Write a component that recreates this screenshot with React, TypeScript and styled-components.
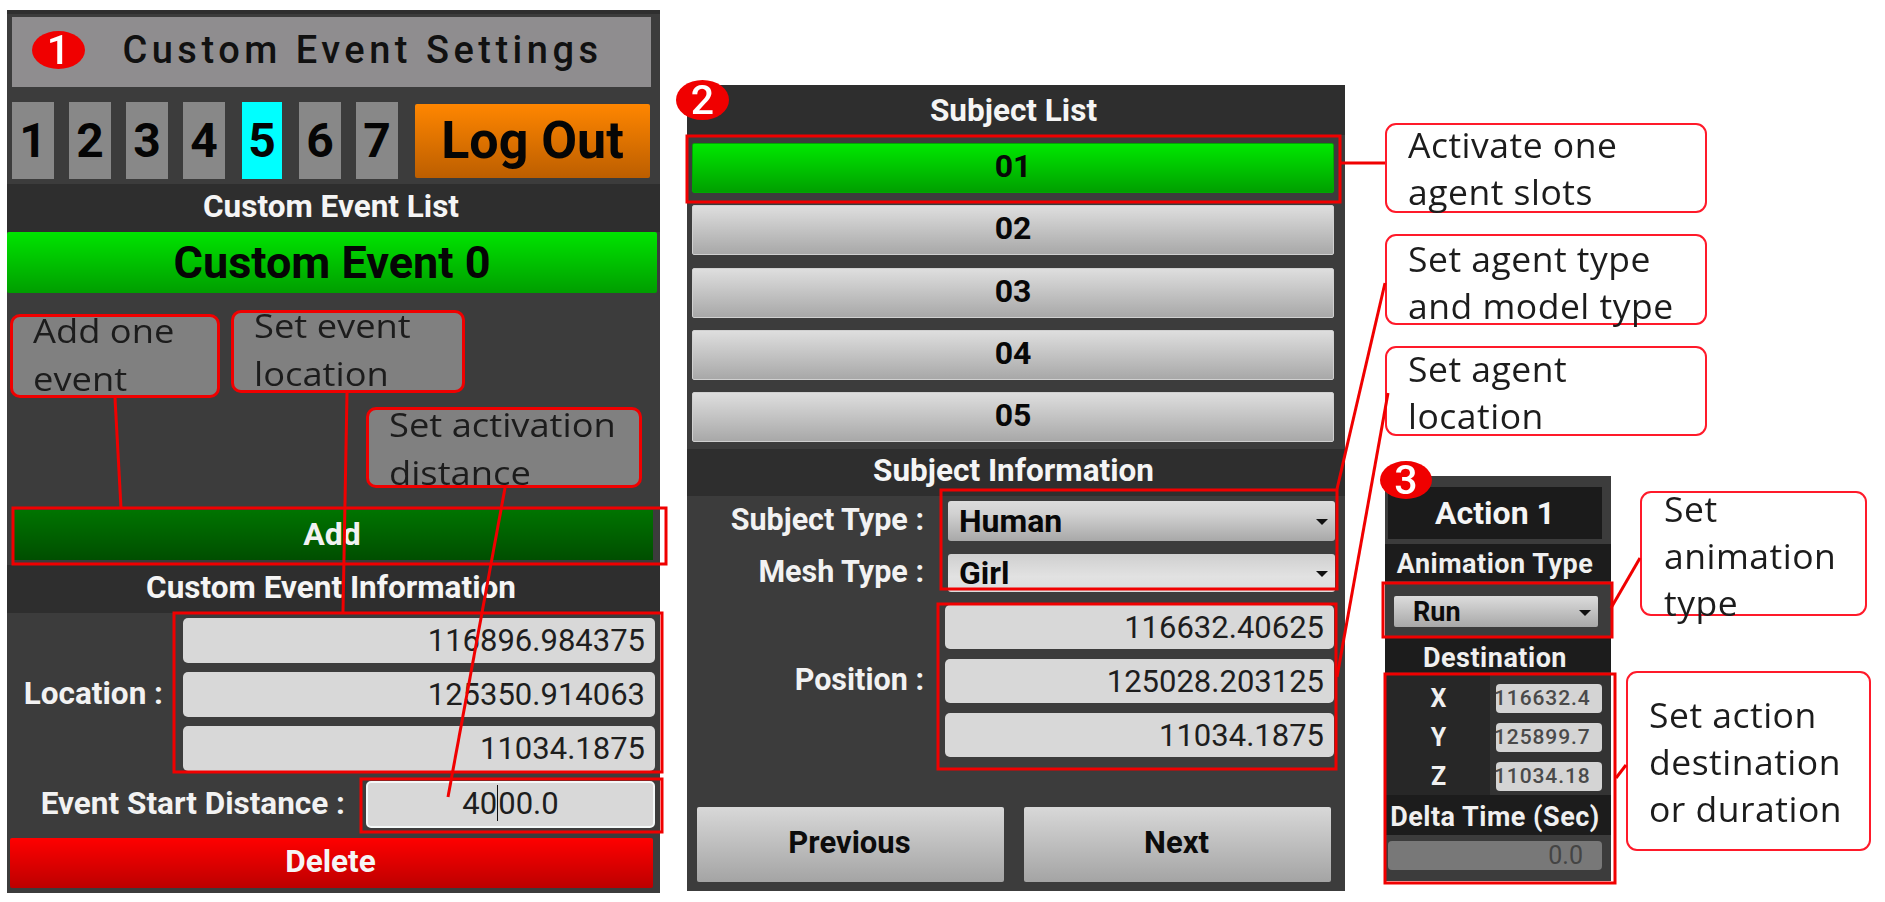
import styled, { createGlobalStyle } from 'styled-components';

const subjects = ['01', '02', '03', '04', '05'];
const tabs = ['1', '2', '3', '4', '5', '6', '7'];

const GlobalStyle = createGlobalStyle`
  html, body {
    margin: 0;
    padding: 0;
    background: #fff;
    font-family: Roboto, "Liberation Sans", sans-serif;
  }

  * {
    box-sizing: border-box;
  }
`;

function App() {
  return (
    <>
      <GlobalStyle />
      <Stage>
        <EventPanel>
          <Badge $left={25} $top={21} $w={53} $h={38}>1</Badge>
          <SettingsTitle>Custom Event Settings</SettingsTitle>
          <TabRow>
            {tabs.map((t) => (
              <Tab key={t} $active={t === '5'}>{t}</Tab>
            ))}
            <LogOut>Log Out</LogOut>
          </TabRow>
          <Strip $h={48}>Custom Event List</Strip>
          <EventItem>Custom Event 0</EventItem>
          <CalloutArea>
            <PanelCallout $left={3} $top={21} $w={210} $h={84} $shift={-10}>
              <StretchText>Add one<br />event</StretchText>
            </PanelCallout>
            <PanelCallout $left={224} $top={17} $w={234} $h={83} $shift={-11}>
              <StretchText>Set event<br />location</StretchText>
            </PanelCallout>
            <PanelCallout $left={359} $top={114} $w={276} $h={81} $shift={-9}>
              <StretchText>Set activation<br />distance</StretchText>
            </PanelCallout>
          </CalloutArea>
          <AddRow>
            <AddButton>Add</AddButton>
          </AddRow>
          <Strip $h={48}>Custom Event Information</Strip>
          <LocationRow>
            <RowLabel $w={176} $pad={20}>Location :</RowLabel>
            <InputStack $gap={9}>
              <NumberField $h={45} $w={472}>116896.984375</NumberField>
              <NumberField $h={45} $w={472}>125350.914063</NumberField>
              <NumberField $h={45} $w={472}>11034.1875</NumberField>
            </InputStack>
          </LocationRow>
          <DistanceRow>
            <RowLabel $w={359} $pad={21}>Event Start Distance :</RowLabel>
            <DistanceField>
              40<Caret />00.0
            </DistanceField>
          </DistanceRow>
          <DeleteButton>Delete</DeleteButton>
        </EventPanel>

        <SubjectPanel>
          <Badge $left={-11} $top={-5} $w={53} $h={40}>2</Badge>
          <Strip $h={50} $lift={0}>Subject List</Strip>
          <SubjectList>
            {subjects.map((s) => (
              <SubjectButton key={s} $active={s === '01'}>{s}</SubjectButton>
            ))}
          </SubjectList>
          <Strip $h={47}>Subject Information</Strip>
          <SelectRow $mt={5}>
            <RowLabel $w={258} $pad={21} $small>Subject Type :</RowLabel>
            <Select $h={40} $w={387}>Human<Arrow /></Select>
          </SelectRow>
          <SelectRow $mt={13}>
            <RowLabel $w={258} $pad={21} $small>Mesh Type :</RowLabel>
            <Select $h={38} $w={387} $light>Girl<Arrow /></Select>
          </SelectRow>
          <PositionRow>
            <RowLabel $w={258} $pad={21} $small>Position :</RowLabel>
            <InputStack $gap={10}>
              <NumberField $h={44} $w={389}>116632.40625</NumberField>
              <NumberField $h={44} $w={389}>125028.203125</NumberField>
              <NumberField $h={44} $w={389}>11034.1875</NumberField>
            </InputStack>
          </PositionRow>
          <PagerRow>
            <PagerButton>Previous</PagerButton>
            <PagerButton>Next</PagerButton>
          </PagerRow>
        </SubjectPanel>

        <RightColumn>
          <NoteStack>
            <Note $w={322} $h={90} $padLeft={21} $shift={-4}><span>Activate one<br />agent slots</span></Note>
            <Note $w={322} $h={91} $padLeft={21} $shift={-1}><span>Set agent type<br />and model type</span></Note>
            <Note $w={322} $h={90} $padLeft={21} $shift={-3}><span>Set agent<br />location</span></Note>
          </NoteStack>
          <ActionRow>
            <ActionPanel>
              <Badge $left={-5} $top={-15} $w={52} $h={38}>3</Badge>
              <ActionTitle>Action 1</ActionTitle>
              <MiniStrip $h={37} $mt={5} $drop={3}>Animation Type</MiniStrip>
              <RunRow>
                <RunSelect>Run<Arrow /></RunSelect>
              </RunRow>
              <MiniStrip $h={36} $drop={8}>Destination</MiniStrip>
              <AxisGrid>
                {[
                  ['X', '116632.40625'],
                  ['Y', '125899.71875'],
                  ['Z', '11034.1875'],
                ].map(([axis, value]) => (
                  <AxisRow key={axis}>
                    <AxisName>{axis}</AxisName>
                    <AxisField><AxisValue>{value}</AxisValue></AxisField>
                  </AxisRow>
                ))}
              </AxisGrid>
              <MiniStrip $h={40} $drop={3}>Delta Time (Sec)</MiniStrip>
              <DeltaField>0.0</DeltaField>
            </ActionPanel>
            <SideNotes>
              <Note $w={227} $h={125} $padLeft={22} $shift={-8}><span>Set<br />animation<br />type</span></Note>
              <Note $w={245} $h={180} $padLeft={21} $shift={18}><span>Set action<br />destination<br />or duration</span></Note>
            </SideNotes>
          </ActionRow>
        </RightColumn>

        <Overlay viewBox="0 0 1885 902" fill="none" stroke="#f00000" strokeWidth="3">
          <rect x="13" y="508" width="653" height="56" />
          <rect x="174" y="613" width="488" height="159" />
          <rect x="361" y="779" width="301" height="53" />
          <rect x="687" y="136" width="653" height="66" />
          <rect x="941" y="490" width="396" height="99" />
          <rect x="938" y="604" width="398" height="165" />
          <rect x="1383" y="583" width="229" height="54" />
          <rect x="1385" y="674" width="230" height="209" />
          <path d="M115 398L121 508" />
          <path d="M347 393L343 612" />
          <path d="M505 488L448 797" />
          <path d="M1340 163H1385" />
          <path d="M1337 489L1385 283" />
          <path d="M1337 677L1388 393" />
          <path d="M1611 608L1640 558" />
          <path d="M1616 778L1626 765" />
        </Overlay>
      </Stage>
    </>
  );
}

const Stage = styled.div`
  position: relative;
  display: flex;
  align-items: flex-start;
  width: 1885px;
  height: 902px;
  padding-left: 7px;
  overflow: hidden;
  filter: blur(0.6px);
`;

const Overlay = styled.svg`
  position: absolute;
  inset: 0;
  width: 1885px;
  height: 902px;
  z-index: 2;
  pointer-events: none;
`;

const Badge = styled.div<{ $left: number; $top: number; $w: number; $h: number }>`
  position: absolute;
  left: ${(p) => p.$left}px;
  top: ${(p) => p.$top}px;
  width: ${(p) => p.$w}px;
  height: ${(p) => p.$h}px;
  border-radius: 50%;
  background: #f00000;
  color: #fff;
  display: flex;
  align-items: center;
  justify-content: center;
  font-size: 41px;
  font-weight: 500;
  line-height: 1;
  z-index: 3;
`;

const EventPanel = styled.section`
  position: relative;
  display: flex;
  flex-direction: column;
  flex: 0 0 653px;
  height: 883px;
  margin-top: 10px;
  background: #3c3c3c;
  box-shadow: inset 0 4px 0 #2f2f2f;
`;

const SettingsTitle = styled.div`
  height: 70px;
  margin: 7px 9px 0 5px;
  padding: 0 0 4px 62px;
  display: flex;
  align-items: center;
  justify-content: center;
  background: #8f8d8f;
  color: #111;
  font-size: 38px;
  font-weight: 500;
  letter-spacing: 4.5px;
`;

const TabRow = styled.div`
  display: flex;
  align-items: center;
  gap: 15px;
  height: 82px;
  margin-top: 15px;
  padding: 0 10px 5px 5px;
`;

const Tab = styled.div<{ $active?: boolean }>`
  flex: 0 0 ${(p) => (p.$active ? 40 : 42)}px;
  height: 77px;
  margin: 0 ${(p) => (p.$active ? 2 : 0)}px;
  display: flex;
  align-items: center;
  justify-content: center;
  background: ${(p) => (p.$active ? '#00ffff' : '#888888')};
  color: #050505;
  font-size: 48px;
  font-weight: 700;
`;

const LogOut = styled.div`
  flex: 1;
  height: 74px;
  margin-left: 2px;
  display: flex;
  align-items: center;
  justify-content: center;
  border-radius: 2px;
  background: linear-gradient(#ff8600, #bc5e00);
  color: #050505;
  font-size: 52px;
  font-weight: 700;
`;

const Strip = styled.div<{ $h: number; $lift?: number }>`
  height: ${(p) => p.$h}px;
  flex: none;
  padding: 0 5px ${(p) => p.$lift ?? 4}px 0;
  display: flex;
  align-items: center;
  justify-content: center;
  background: #2e2e2e;
  color: #f5f5f5;
  font-size: 31.5px;
  font-weight: 700;
`;

const EventItem = styled.div`
  height: 61px;
  margin-right: 3px;
  display: flex;
  align-items: center;
  justify-content: center;
  border-radius: 2px;
  background: linear-gradient(#00e400, #009e00);
  color: #050505;
  font-size: 45px;
  font-weight: 700;
`;

const CalloutArea = styled.div`
  position: relative;
  height: 214px;
`;

const PanelCallout = styled.div<{ $left: number; $top: number; $w: number; $h: number; $shift: number }>`
  position: absolute;
  left: ${(p) => p.$left}px;
  top: ${(p) => p.$top}px;
  width: ${(p) => p.$w}px;
  height: ${(p) => p.$h}px;
  padding-left: 20px;
  border: 3px solid #f00000;
  border-radius: 10px;
  background: #808080;
  color: #1c1c1c;
  font-family: "Open Sans", sans-serif;
  font-size: 33px;
  line-height: 48px;
  z-index: 3;

  & > span {
    margin-top: ${(p) => p.$shift}px;
  }
`;

const StretchText = styled.span`
  display: block;
  transform: scaleX(1.1);
  transform-origin: left center;
  white-space: nowrap;
`;

const AddRow = styled.div`
  height: 58px;
  padding: 3px 7px 5px 7px;
`;

const AddButton = styled.div`
  height: 50px;
  padding: 0 3px 3px 0;
  display: flex;
  align-items: center;
  justify-content: center;
  background: linear-gradient(#007400, #004e00);
  color: #f2f2f2;
  font-size: 32px;
  font-weight: 700;
`;

const LocationRow = styled.div`
  display: flex;
  align-items: center;
  padding-top: 5px;
`;

const RowLabel = styled.div<{ $w: number; $pad: number; $small?: boolean }>`
  flex: 0 0 ${(p) => p.$w}px;
  padding: 0 ${(p) => p.$pad}px 3px 0;
  text-align: right;
  color: #f2f2f2;
  font-size: ${(p) => (p.$small ? 30.5 : 31.5)}px;
  font-weight: 700;
  white-space: nowrap;
`;

const InputStack = styled.div<{ $gap: number }>`
  display: flex;
  flex-direction: column;
  gap: ${(p) => p.$gap}px;
`;

const NumberField = styled.div<{ $h: number; $w: number }>`
  width: ${(p) => p.$w}px;
  height: ${(p) => p.$h}px;
  padding-right: 10px;
  display: flex;
  align-items: center;
  justify-content: flex-end;
  border-radius: 5px;
  background: #d8d8d8;
  color: #1e1e1e;
  font-size: 31px;
`;

const DistanceRow = styled.div`
  display: flex;
  align-items: center;
  margin-top: 10px;
`;

const DistanceField = styled.div`
  width: 289px;
  height: 47px;
  padding-bottom: 3px;
  display: flex;
  align-items: center;
  justify-content: center;
  border: 2px solid #f4f8f8;
  border-radius: 5px;
  background: #d8d8d8;
  color: #1e1e1e;
  font-size: 31px;
`;

const Caret = styled.span`
  display: inline-block;
  width: 1px;
  height: 36px;
  background: #111;
`;

const DeleteButton = styled.div`
  height: 50px;
  margin: 10px 7px 0 3px;
  padding: 0 2px 4px 0;
  display: flex;
  align-items: center;
  justify-content: center;
  border-radius: 2px;
  background: linear-gradient(#ff0000, #bc0000);
  color: #f5f5f5;
  font-size: 31.5px;
  font-weight: 700;
`;

const SubjectPanel = styled.section`
  position: relative;
  display: flex;
  flex-direction: column;
  flex: 0 0 658px;
  height: 806px;
  margin: 85px 0 0 27px;
  background: #3c3c3c;
`;

const SubjectList = styled.div`
  display: flex;
  flex-direction: column;
  gap: 12.25px;
  padding: 8px 11px 7px 5px;
`;

const SubjectButton = styled.div<{ $active?: boolean }>`
  height: 50px;
  padding-bottom: 4px;
  display: flex;
  align-items: center;
  justify-content: center;
  border-radius: 2px;
  border: 1px solid ${(p) => (p.$active ? '#00a800' : '#d0d0d0')};
  background: ${(p) =>
    p.$active ? 'linear-gradient(#00e800, #00a000)' : 'linear-gradient(#dedede, #a8a8a8)'};
  color: #080808;
  font-size: 32px;
  font-weight: 700;
`;

const SelectRow = styled.div<{ $mt: number }>`
  display: flex;
  align-items: center;
  margin-top: ${(p) => p.$mt}px;
`;

const Select = styled.div<{ $h: number; $w: number; $light?: boolean }>`
  position: relative;
  width: ${(p) => p.$w}px;
  height: ${(p) => p.$h}px;
  margin-left: 3px;
  padding-left: 11px;
  display: flex;
  align-items: center;
  border-radius: 3px;
  background: ${(p) =>
    p.$light
      ? 'linear-gradient(#cfcfcf, #e2e2e2 60%, #dcdcdc)'
      : 'linear-gradient(#dcdcdc, #d2d2d2 30%, #a8a8a8)'};
  color: #080808;
  font-size: 32px;
  font-weight: 700;
`;

const Arrow = styled.span`
  position: absolute;
  right: 7px;
  top: 50%;
  margin-top: -2px;
  width: 0;
  height: 0;
  border-left: 6px solid transparent;
  border-right: 6px solid transparent;
  border-top: 6px solid #111;
`;

const PositionRow = styled.div`
  display: flex;
  align-items: center;
  margin-top: 13px;
`;

const PagerRow = styled.div`
  display: flex;
  gap: 20px;
  margin-top: 50px;
  padding-left: 10px;
`;

const PagerButton = styled.div`
  flex: 0 0 307px;
  height: 75px;
  padding: 0 2px 4px 0;
  display: flex;
  align-items: center;
  justify-content: center;
  border-radius: 2px;
  background: linear-gradient(#d8d8d8, #a4a4a4);
  color: #0c0c0c;
  font-size: 31px;
  font-weight: 700;
`;

const RightColumn = styled.div`
  display: flex;
  flex-direction: column;
  margin: 123px 0 0 40px;
`;

const NoteStack = styled.div`
  display: flex;
  flex-direction: column;
  gap: 21px;
`;

const Note = styled.div<{ $w: number; $h: number; $padLeft: number; $shift: number }>`
  width: ${(p) => p.$w}px;
  height: ${(p) => p.$h}px;
  padding-left: ${(p) => p.$padLeft}px;
  border: 2.5px solid #ff1a2a;
  border-radius: 11px;
  background: #fff;
  color: #1c1c1c;
  font-family: "Open Sans", sans-serif;
  font-size: 35.5px;
  line-height: 47px;
  letter-spacing: 0.5px;
  white-space: nowrap;

  & > span {
    display: block;
    margin-top: ${(p) => p.$shift}px;
  }
`;

const ActionRow = styled.div`
  display: flex;
  align-items: flex-start;
  margin-top: 40px;
`;

const ActionPanel = styled.section`
  position: relative;
  display: flex;
  flex-direction: column;
  flex: 0 0 226px;
  height: 405px;
  padding-top: 11px;
  background: #3c3c3c;
`;

const ActionTitle = styled.div`
  height: 52px;
  margin: 0 9px 0 3px;
  display: flex;
  align-items: center;
  justify-content: center;
  background: #1b1b1b;
  color: #f5f5f5;
  font-size: 32px;
  font-weight: 700;
`;

const MiniStrip = styled.div<{ $h: number; $mt?: number; $drop: number }>`
  height: ${(p) => p.$h}px;
  margin-top: ${(p) => p.$mt ?? 0}px;
  padding: ${(p) => p.$drop}px 6px 0 0;
  display: flex;
  align-items: center;
  justify-content: center;
  background: #1c1c1c;
  color: #f0f0f0;
  font-size: 27px;
  font-weight: 700;
  letter-spacing: 0.5px;
  white-space: nowrap;
`;

const RunRow = styled.div`
  height: 55px;
  padding: 15px 13px 0 9px;
`;

const RunSelect = styled.div`
  position: relative;
  height: 31px;
  padding-left: 19px;
  display: flex;
  align-items: center;
  border-radius: 2px;
  background: linear-gradient(#dcdcdc, #a8a8a8);
  color: #0c0c0c;
  font-size: 27px;
  font-weight: 700;
`;

const AxisGrid = styled.div`
  display: flex;
  flex-direction: column;
  gap: 10px;
  padding: 12px 0 4px;
  background: linear-gradient(90deg, #272727 105px, #333333 105px);
`;

const AxisRow = styled.div`
  display: flex;
  align-items: center;
  height: 29px;
`;

const AxisName = styled.div`
  flex: 0 0 111px;
  padding-right: 4px;
  text-align: center;
  color: #f0f0f0;
  font-size: 25px;
  font-weight: 700;
`;

const AxisField = styled.div`
  width: 106px;
  height: 29px;
  padding-right: 12px;
  border-radius: 4px;
  background: #d4d4d4;
`;

const AxisValue = styled.div`
  height: 29px;
  overflow: hidden;
  white-space: nowrap;
  line-height: 29px;
  text-indent: -2px;
  color: #4a4a4a;
  font-size: 21px;
  font-weight: 500;
  letter-spacing: 0.9px;
`;

const DeltaField = styled.div`
  height: 29px;
  margin: 6px 9px 0 3px;
  padding-right: 19px;
  display: flex;
  align-items: center;
  justify-content: flex-end;
  border-radius: 4px;
  background: #787878;
  color: #444;
  font-size: 25px;
`;

const SideNotes = styled.div`
  display: flex;
  flex-direction: column;
  align-items: flex-start;
  gap: 55px;
  margin: 15px 0 0 15px;

  & > :first-child {
    margin-left: 14px;
  }
`;

export default App;
